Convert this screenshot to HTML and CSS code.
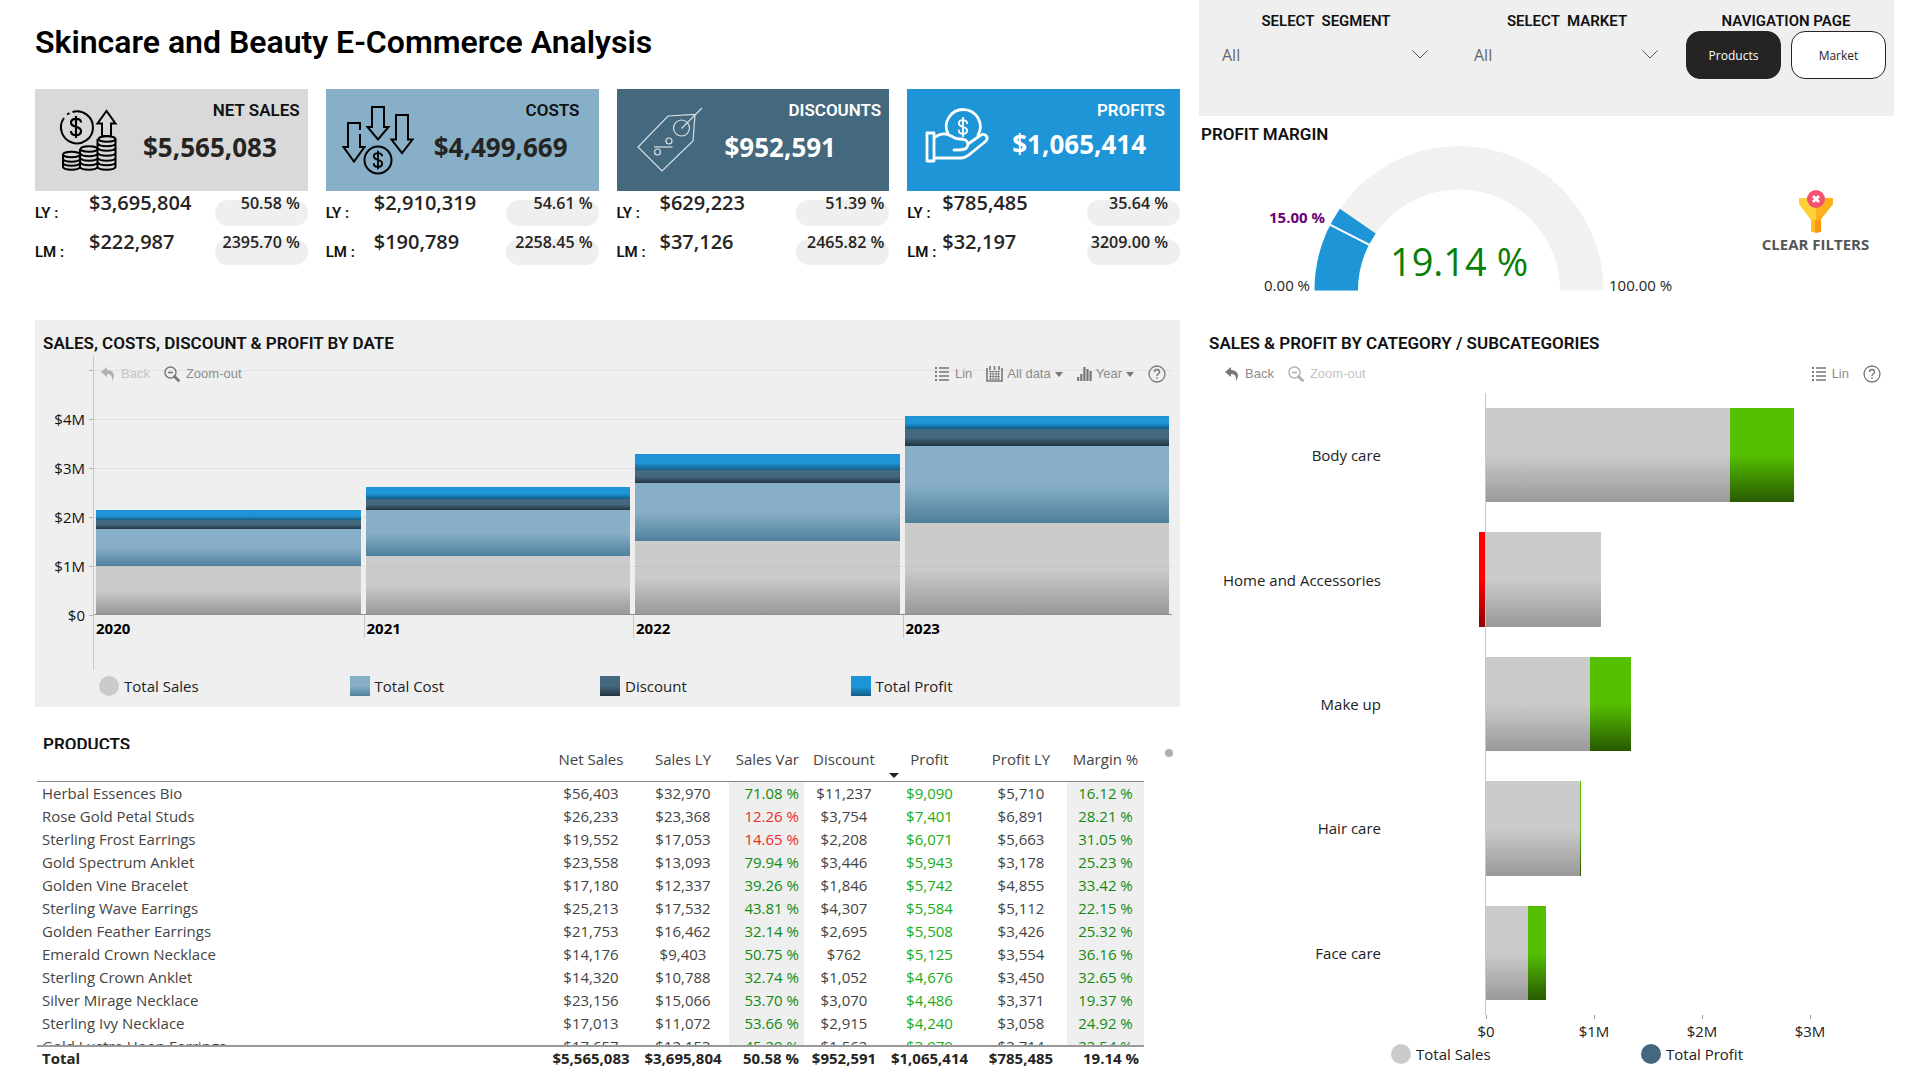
FILE: index.html
```html
<!DOCTYPE html>
<html lang="en">
<head>
<meta charset="utf-8">
<title>Skincare and Beauty E-Commerce Analysis</title>
<link rel="stylesheet" href="styles.css">
</head>
<body>
<svg class="defs" aria-hidden="true">
  <symbol id="i-back" viewBox="0 0 14 14"><path d="M6 0 0 5l6 5V7c3.500 0 5.500 1.500 5 7 3.500-5 2.500-10.500-5-11z" fill="currentColor"/></symbol>
  <symbol id="i-zoom" viewBox="0 0 16 16"><g fill="none" stroke="currentColor"><circle cx="6.500" cy="6.500" r="5.500" stroke-width="1.400"/><path d="M4 6.500h5" stroke-width="1.600"/><path d="m10.500 10.500 4 4" stroke-width="2.800" stroke-linecap="round"/></g></symbol>
  <symbol id="i-list" viewBox="0 0 14 16"><path d="M4 2h10M4 6h10M4 10h10M4 14h10" stroke="currentColor" stroke-width="1.300"/><path d="M0 2h2M0 6h2M0 10h2M0 14h2" stroke="currentColor" stroke-width="2"/></symbol>
  <symbol id="i-cal" viewBox="0 0 17 16"><path d="M1 2v13h15V2M4 0v4M8.500 0v4M13 0v4" fill="none" stroke="currentColor" stroke-width="1.600"/><path d="M3 5.500h11M3 8h11M3 10.500h11M3 13h11M4.500 5v9M7 5v9M10 5v9M12.500 5v9" stroke="currentColor" stroke-width=".8"/></symbol>
  <symbol id="i-bars" viewBox="0 0 15 16"><path d="M1.200 11v4M4.300 8v7M7.400 1v14M10.500 3v12M13.600 5v10" stroke="currentColor" stroke-width="2.200"/></symbol>
  <symbol id="i-help" viewBox="0 0 18 18"><circle cx="9" cy="9" r="8" fill="none" stroke="currentColor" stroke-width="1.300"/><path d="M6.500 7c0-3.300 5-3.300 5 0 0 1.800-2.500 1.800-2.500 4M9 12.300v1.500" fill="none" stroke="currentColor" stroke-width="1.400"/></symbol>
  <symbol id="i-caret" viewBox="0 0 8 5"><path d="M0 0h8L4 5z" fill="currentColor"/></symbol>
  <symbol id="i-chevron" viewBox="0 0 16 9"><path d="m.5.5 7.500 7.500L15.500.5" fill="none" stroke="currentColor"/></symbol>
  <symbol id="i-dollar" viewBox="0 0 12 24"><path d="M6 1v22M11 7.500C11 5 9 3.800 6 3.800S1 5.300 1 7.800C1 13 11 10.500 11 16c0 2.600-2 4.200-5 4.200S1 18.600 1 16" fill="none" stroke="currentColor" stroke-width="2.200"/></symbol>
</svg>
<main class="page">
  <div class="left">
    <h1>Skincare and Beauty E-Commerce Analysis</h1>

    <section class="kpis">
      <article class="kpi kpi-sales">
        <div class="card">
          <svg class="card-icon" viewBox="0 0 108 102" fill="none" stroke="currentColor" stroke-width="2">
            <path d="M37.500 23a16 16 0 1 1-8.500 6M32 25.500l2.500-1.400"/>
            <use href="#i-dollar" x="35" y="26" width="12" height="24"/>
            <path d="M67 47V34.500h-4.500L71.500 22l9 12.500H76V47z"/>
            <ellipse cx="36.500" cy="65.500" rx="8.500" ry="2.800"/><ellipse cx="54" cy="60" rx="8.500" ry="2.800"/><ellipse cx="72" cy="50" rx="8.500" ry="2.800"/>
            <path d="M28 65.500V78c1 3.500 16 3.500 17 0 1 3.500 16.500 3.500 17.500 0 1 3.500 17 3.500 18 0V50M45 78V60M62.500 78V50M28 70c1 3.500 16 3.500 17 0M28 74c1 3.500 16 3.500 17 0M45.500 64.500c1 3.500 16 3.500 17 0M45.500 69c1 3.500 16 3.500 17 0M45.500 73.500c1 3.500 16 3.500 17 0M63 54.500c1 3.500 16.500 3.500 17.500 0M63 59c1 3.500 16.500 3.500 17.500 0M63 64c1 3.500 16.500 3.500 17.500 0M63 69c1 3.500 16.500 3.500 17.500 0M63 73.500c1 3.500 16.500 3.500 17.500 0"/>
          </svg>
          <h2>NET SALES</h2>
          <strong>$5,565,083</strong>
        </div>
        <div class="compare"><span class="when">LY :</span><span class="amount">$3,695,804</span><span class="delta">50.58 %</span></div>
        <div class="compare"><span class="when">LM :</span><span class="amount">$222,987</span><span class="delta">2395.70 %</span></div>
      </article>
      <article class="kpi kpi-costs">
        <div class="card">
          <svg class="card-icon" viewBox="0 0 108 102" fill="none" stroke="currentColor" stroke-width="2">
            <path d="M46 18h12v20h4.500L52 50.500 41.500 38H46z"/>
            <path d="M70 26h12v24.500h4.500L76 64 65.500 50.500H70zM34 41V34H22v24h-4.500L28 72.500 38.500 58H34V45"/>
            <circle cx="52" cy="71" r="13.500"/>
            <use href="#i-dollar" x="47" y="61" width="10" height="20"/>
          </svg>
          <h2>COSTS</h2>
          <strong>$4,499,669</strong>
        </div>
        <div class="compare"><span class="when">LY :</span><span class="amount">$2,910,319</span><span class="delta">54.61 %</span></div>
        <div class="compare"><span class="when">LM :</span><span class="amount">$190,789</span><span class="delta">2258.45 %</span></div>
      </article>
      <article class="kpi kpi-discounts">
        <div class="card">
          <svg class="card-icon" viewBox="0 0 108 102" fill="none" stroke="currentColor" stroke-width="1.200">
            <path d="M51 27 78 25.500 76 52 45 82 21 58zM64.500 39.500 85 19"/>
            <circle cx="64.500" cy="39" r="8"/>
            <path d="M37 58h18.500"/><circle cx="52" cy="52" r="3"/><circle cx="40.500" cy="63" r="3"/>
          </svg>
          <h2>DISCOUNTS</h2>
          <strong>$952,591</strong>
        </div>
        <div class="compare"><span class="when">LY :</span><span class="amount">$629,223</span><span class="delta">51.39 %</span></div>
        <div class="compare"><span class="when">LM :</span><span class="amount">$37,126</span><span class="delta">2465.82 %</span></div>
      </article>
      <article class="kpi kpi-profits">
        <div class="card">
          <svg class="card-icon" viewBox="0 0 108 102" fill="none" stroke="currentColor" stroke-width="2.800" stroke-linejoin="round" stroke-linecap="round">
            <path d="M20 44h7v28h-7z"/>
            <path d="M28 48c6-4 11-4 16-1 3 2 5 3 9 3 8 0 9 5 7 8-1 3-6 3-13 3M28 69h26c4 0 6-2 9-4l16-13c3-4-1-8-5-6L61 55"/>
            <path d="M41 45a17 17 0 1 1 30 1"/>
            <use href="#i-dollar" x="50.500" y="28" width="11" height="20"/>
          </svg>
          <h2>PROFITS</h2>
          <strong>$1,065,414</strong>
        </div>
        <div class="compare"><span class="when">LY :</span><span class="amount">$785,485</span><span class="delta">35.64 %</span></div>
        <div class="compare"><span class="when">LM :</span><span class="amount">$32,197</span><span class="delta">3209.00 %</span></div>
      </article>
    </section>

    <section class="panel timeline">
      <h2>SALES, COSTS, DISCOUNT &amp; PROFIT BY DATE</h2>
      <div class="time-chart">
        <ul class="y-axis"><li></li><li>$4M</li><li>$3M</li><li>$2M</li><li>$1M</li><li>$0</li></ul>
        <div class="plot">
          <div class="columns">
            <div class="column"><i class="profit" style="height:10px"></i><i class="discount" style="height:9px"></i><i class="cost" style="height:37px"></i><i class="sales" style="height:48px"></i></div>
            <div class="column"><i class="profit" style="height:12px"></i><i class="discount" style="height:11px"></i><i class="cost" style="height:46px"></i><i class="sales" style="height:58px"></i></div>
            <div class="column"><i class="profit" style="height:16px"></i><i class="discount" style="height:13px"></i><i class="cost" style="height:58px"></i><i class="sales" style="height:73px"></i></div>
            <div class="column"><i class="profit" style="height:13px"></i><i class="discount" style="height:17px"></i><i class="cost" style="height:77px"></i><i class="sales" style="height:91px"></i></div>
          </div>
          <div class="years"><span>2020</span><span>2021</span><span>2022</span><span>2023</span></div>
        </div>
        <div class="toolbar">
          <button class="faded" disabled><svg width="14" height="14"><use href="#i-back"/></svg>Back</button>
          <button><svg width="16" height="16"><use href="#i-zoom"/></svg>Zoom-out</button>
          <span class="spacer"></span>
          <button><svg width="14" height="16"><use href="#i-list"/></svg>Lin</button>
          <button class="menu"><svg width="17" height="16"><use href="#i-cal"/></svg>All data<svg width="8" height="5"><use href="#i-caret"/></svg></button>
          <button class="menu"><svg width="15" height="16"><use href="#i-bars"/></svg>Year<svg width="8" height="5"><use href="#i-caret"/></svg></button>
          <button aria-label="Help"><svg width="18" height="18"><use href="#i-help"/></svg></button>
        </div>
      </div>
      <ul class="legend four">
        <li><i class="dot"></i>Total Sales</li><li><i class="cost"></i>Total Cost</li><li><i class="discount"></i>Discount</li><li><i class="profit"></i>Total Profit</li>
      </ul>
    </section>

    <section class="products">
      <h2>PRODUCTS</h2>
      <span class="scroll-dot"></span>
      <table>
        <thead><tr><th></th><th>Net Sales</th><th>Sales LY</th><th>Sales Var</th><th>Discount</th><th class="sorted">Profit</th><th>Profit LY</th><th>Margin %</th></tr></thead>
        <tbody>
          <tr><td>Herbal Essences Bio</td><td>$56,403</td><td>$32,970</td><td>71.08 %</td><td>$11,237</td><td>$9,090</td><td>$5,710</td><td>16.12 %</td></tr>
          <tr><td>Rose Gold Petal Studs</td><td>$26,233</td><td>$23,368</td><td class="low">12.26 %</td><td>$3,754</td><td>$7,401</td><td>$6,891</td><td>28.21 %</td></tr>
          <tr><td>Sterling Frost Earrings</td><td>$19,552</td><td>$17,053</td><td class="low">14.65 %</td><td>$2,208</td><td>$6,071</td><td>$5,663</td><td>31.05 %</td></tr>
          <tr><td>Gold Spectrum Anklet</td><td>$23,558</td><td>$13,093</td><td>79.94 %</td><td>$3,446</td><td>$5,943</td><td>$3,178</td><td>25.23 %</td></tr>
          <tr><td>Golden Vine Bracelet</td><td>$17,180</td><td>$12,337</td><td>39.26 %</td><td>$1,846</td><td>$5,742</td><td>$4,855</td><td>33.42 %</td></tr>
          <tr><td>Sterling Wave Earrings</td><td>$25,213</td><td>$17,532</td><td>43.81 %</td><td>$4,307</td><td>$5,584</td><td>$5,112</td><td>22.15 %</td></tr>
          <tr><td>Golden Feather Earrings</td><td>$21,753</td><td>$16,462</td><td>32.14 %</td><td>$2,695</td><td>$5,508</td><td>$3,426</td><td>25.32 %</td></tr>
          <tr><td>Emerald Crown Necklace</td><td>$14,176</td><td>$9,403</td><td>50.75 %</td><td>$762</td><td>$5,125</td><td>$3,554</td><td>36.16 %</td></tr>
          <tr><td>Sterling Crown Anklet</td><td>$14,320</td><td>$10,788</td><td>32.74 %</td><td>$1,052</td><td>$4,676</td><td>$3,450</td><td>32.65 %</td></tr>
          <tr><td>Silver Mirage Necklace</td><td>$23,156</td><td>$15,066</td><td>53.70 %</td><td>$3,070</td><td>$4,486</td><td>$3,371</td><td>19.37 %</td></tr>
          <tr><td>Sterling Ivy Necklace</td><td>$17,013</td><td>$11,072</td><td>53.66 %</td><td>$2,915</td><td>$4,240</td><td>$3,058</td><td>24.92 %</td></tr>
          <tr><td>Gold Lustre Hoop Earrings</td><td>$17,657</td><td>$12,153</td><td>45.29 %</td><td>$1,562</td><td>$3,979</td><td>$2,714</td><td>22.54 %</td></tr>
        </tbody>
        <tfoot><tr><td>Total</td><td>$5,565,083</td><td>$3,695,804</td><td>50.58 %</td><td>$952,591</td><td>$1,065,414</td><td>$785,485</td><td>19.14 %</td></tr></tfoot>
      </table>
    </section>
  </div>

  <div class="right">
    <section class="filters">
      <div class="filter wide">
        <label for="segment">SELECT  SEGMENT</label>
        <div class="select"><select id="segment"><option>All</option></select><svg width="16" height="9"><use href="#i-chevron"/></svg></div>
      </div>
      <div class="filter">
        <label for="market">SELECT  MARKET</label>
        <div class="select"><select id="market"><option>All</option></select><svg width="16" height="9"><use href="#i-chevron"/></svg></div>
      </div>
      <nav class="filter">
        <span class="nav-title">NAVIGATION PAGE</span>
        <div class="tabs"><button class="active">Products</button><button>Market</button></div>
      </nav>
    </section>

    <section class="margin">
      <h2>PROFIT MARGIN</h2>
      <div class="margin-body">
        <svg class="gauge" viewBox="0 0 520 160">
          <path fill="#f2f1f0" d="M115.500 146.500a144.500 144.500 0 0 1 289 0h-43.500a101 101 0 0 0-202 0z"/>
          <path fill="#1e95d6" d="M115.500 146.500A144.500 144.500 0 0 1 140.900 64.800L176.700 89.400A101 101 0 0 0 159 146.500z"/>
          <path stroke="#fff" stroke-width="2" d="M131.300 80.900 170 100.600"/>
          <text class="target" x="126" y="79" text-anchor="end">15.00 %</text>
          <text class="bound" x="111" y="147" text-anchor="end">0.00 %</text>
          <text class="bound" x="410" y="147">100.00 %</text>
          <text class="reading" x="260" y="132" text-anchor="middle">19.14 %</text>
        </svg>
        <button class="clear">
          <svg width="36" height="43" viewBox="0 0 36 43">
            <path fill="#ffd036" d="M1 8h34v6L22.500 30v12L13 42V30L1 14z"/>
            <path fill="#ffb01f" d="M18 8h17v6L23 29v13h-5z"/>
            <path fill="#ff9811" d="M13 30h10v12l-5 1-5-2z"/><path fill="#ffbe28" d="M13 30h4v12l-4-1z"/>
            <circle cx="18" cy="9" r="9" fill="#f4516c"/><path d="m15 6 6 6m0-6-6 6" stroke="#fff" stroke-width="2.800"/>
          </svg>
          CLEAR FILTERS
        </button>
      </div>
    </section>

    <section class="categories">
      <h2>SALES &amp; PROFIT BY CATEGORY / SUBCATEGORIES</h2>
      <div class="toolbar">
        <button><svg width="14" height="14"><use href="#i-back"/></svg>Back</button>
        <button class="faded" disabled><svg width="16" height="16"><use href="#i-zoom"/></svg>Zoom-out</button>
        <span class="spacer"></span>
        <button><svg width="14" height="16"><use href="#i-list"/></svg>Lin</button>
        <button aria-label="Help"><svg width="18" height="18"><use href="#i-help"/></svg></button>
      </div>
      <div class="bars">
        <div class="bar"><span>Body care</span><div class="neg"></div><div class="pos"><i class="sales" style="width:59.800%"></i><i class="gain" style="width:15.700%"></i></div></div>
        <div class="bar"><span>Home and Accessories</span><div class="neg"><i class="loss" style="width:6px"></i></div><div class="pos"><i class="sales" style="width:28.200%"></i></div></div>
        <div class="bar"><span>Make up</span><div class="neg"></div><div class="pos"><i class="sales" style="width:25.500%"></i><i class="gain" style="width:10%"></i></div></div>
        <div class="bar"><span>Hair care</span><div class="neg"></div><div class="pos"><i class="sales" style="width:23%"></i><i class="gain" style="width:.3%"></i></div></div>
        <div class="bar"><span>Face care</span><div class="neg"></div><div class="pos"><i class="sales" style="width:10.300%"></i><i class="gain" style="width:4.400%"></i></div></div>
      </div>
      <ul class="x-axis"><li>$0</li><li>$1M</li><li>$2M</li><li>$3M</li></ul>
      <ul class="legend two"><li><i class="dot"></i>Total Sales</li><li><i class="dot teal"></i>Total Profit</li></ul>
    </section>
  </div>
</main>
</body>
</html>
```
FILE: styles.css
```css
* { box-sizing: border-box; }
body { margin: 0; background: #fff; color: #111; font: 15px/20px "Open Sans", "Noto Sans", sans-serif; }
h1, h2, ul { margin: 0; padding: 0; }
ul { list-style: none; }
button, select { font: inherit; color: inherit; background: none; border: 0; padding: 0; margin: 0; }
button { cursor: pointer; }
.defs { display: none; }

.page { display: grid; grid-template-columns: 1145fr 695fr; gap: 19px; padding: 0 26px 0 35px; }
.left { padding-top: 24px; min-width: 0; }
h1 { font: 600 32px/36px Roboto, sans-serif; color: #000; margin-bottom: 29px; }
h2 { font: 600 17px/20px Roboto, sans-serif; }

/* headline figures */
.kpis { display: grid; grid-template-columns: repeat(4, 1fr); gap: 18px; }
.card { height: 102px; display: grid; grid-template-columns: 108px 1fr; grid-template-rows: 33px 1fr; }
.card-icon { grid-row: 1 / 3; width: 108px; height: 102px; color: #000; }
.card h2 { text-align: right; padding: 11px 8px 0 0; white-space: nowrap; }
.card strong { font-size: 26px; line-height: 30px; font-weight: 700; padding-top: 10px; color: #252423; }
.kpi-sales { --indent: 54px; --inset: 8px; }
.kpi-costs { --indent: 48px; --inset: 6px; }
.kpi-discounts { --indent: 43px; --inset: 5px; }
.kpi-profits { --indent: 35px; --inset: 12px; }
.kpi-sales .card { background: #d9d9d9; }
.kpi-costs .card { background: #87afc7; }
.kpi-costs h2 { padding-right: 19px; }
.kpi-discounts .card { background: #44687d; }
.kpi-profits .card { background: #1e95d6; grid-template-columns: 105px 1fr; grid-template-rows: 30px 1fr; }
.kpi-profits h2 { padding-right: 15px; }
.kpi-discounts .card *, .kpi-profits .card * { color: #fff; }
.kpi-discounts .card-icon { opacity: .8; }
.compare { display: grid; grid-template-columns: var(--indent) 1fr 93px; height: 39px; }
.when { font: 600 15px/18px Roboto, sans-serif; padding-top: 13px; white-space: nowrap; }
.amount { font-size: 20px; line-height: 24px; font-weight: 600; color: #252423; }
.delta { position: relative; z-index: 0; height: 35px; padding: 2px var(--inset) 0 0; text-align: right; font-size: 16px; font-weight: 600; white-space: nowrap; color: #252423; }
.delta::before { content: ""; position: absolute; z-index: -1; inset: 9px 0 0 0; border-radius: 13px; background: #efefef; }

/* series fills */
.sales { background: linear-gradient(#cbcbcb 50%, #999); }
.cost { background: linear-gradient(#87afc7 50%, #4f809c); }
.discount { background: linear-gradient(#44687d 50%, #22343f); }
.profit { background: linear-gradient(#1e95d6 55%, #125c85); }
.gain { background: linear-gradient(#55bf00 50%, #285a00); }
.loss { background: linear-gradient(#f00 50%, #8f0000); }

/* timeline */
.panel { background: #efefef; margin-top: 51px; padding: 13px 0 11px; }
.timeline h2 { padding-left: 8px; }
.time-chart { display: grid; grid-template-columns: 58px 1fr; padding-right: 8px; margin-top: 3px; }
.y-axis { grid-area: 1 / 1; padding-top: 4px; display: grid; gap: 29px; align-content: start; }
.y-axis li { height: 20px; display: flex; align-items: center; justify-content: flex-end; gap: 4px; }
.y-axis li::after { content: ""; width: 4px; height: 1px; background: #b5b5b5; }
.plot { grid-area: 1 / 2; height: 314px; border-left: 1px solid #c8c8c8; padding-top: 14px; }
.columns { position: relative; height: 245px; display: grid; grid-template-columns: repeat(4, 1fr); align-items: end; border-bottom: 1px solid #8c8c8c; }
.columns::after { content: ""; position: absolute; inset: 0; background: repeating-linear-gradient(rgba(150, 150, 150, .15) 0 1px, transparent 1px 49px); }
.column { padding: 0 3px 0 2px; }
.column i { display: block; }
.years { display: grid; grid-template-columns: repeat(4, 1fr); font-weight: 700; color: #000; }
.years span { height: 23px; padding: 3px 0 0 2px; }
.years span + span { border-left: 1px solid #c8c8c8; }

.toolbar { display: flex; align-items: center; gap: 14px; height: 18px; font: 13px/18px "Liberation Sans", Arial, sans-serif; color: #8c8c8c; }
.toolbar button { display: flex; align-items: center; gap: 6px; white-space: nowrap; }
.toolbar .menu { gap: 4px; }
.toolbar svg { color: #777; }
.toolbar .faded { color: #c4c4c4; }
.toolbar .faded svg { color: #b0b0b0; }
.spacer { flex: 1; }
.time-chart .toolbar { grid-area: 1 / 2; z-index: 1; margin-top: 9px; padding: 0 6px 0 8px; }

.legend { display: grid; color: #222; }
.legend li { display: flex; align-items: center; gap: 5px; }
.legend i { width: 20px; height: 20px; }
.legend .dot { border-radius: 50%; background: #cbcbcb; }
.legend .teal { background: #44687d; }
.four { grid-template-columns: repeat(4, 1fr); padding: 0 79px 0 64px; margin-top: 6px; }
.two { grid-template-columns: 250px 1fr; padding-left: 192px; margin-top: 3px; }

/* products table */
.products { position: relative; margin-top: 27px; }
.products h2 { height: 15px; overflow: hidden; padding-left: 8px; }
.scroll-dot { position: absolute; right: 7px; top: 15px; width: 8px; height: 8px; border-radius: 50%; background: #b0b0b0; }
table, thead, tbody, tfoot { display: block; }
table { margin: 0 36px 0 2px; color: #444; line-height: 23px; }
tr { display: grid; grid-template-columns: 1fr 92px 92px 75px 80px 91px 92px 77px; }
th, td { padding: 0; text-align: center; white-space: nowrap; }
th { font-weight: 400; height: 32px; line-height: 21px; }
td:first-child { text-align: left; padding-left: 5px; }
th:nth-child(4), td:nth-child(4) { text-align: right; padding-right: 5px; }
thead { border-bottom: 1px solid #888; }
.sorted { position: relative; }
.sorted::before { content: ""; position: absolute; left: 5px; bottom: 3px; border: 5px solid transparent; border-top-color: #222; border-bottom: 0; }
tbody { height: 263px; overflow-y: auto; scrollbar-width: none; }
tbody td:nth-child(4), tbody td:nth-child(8) { background: #efefef; color: #128a12; }
tbody td:nth-child(6) { color: #17ad17; }
tbody td.low { color: #f02a2a; }
tfoot { border-top: 2px solid #999; font-weight: 700; color: #252423; }
tfoot td:nth-child(8) { text-align: right; padding-right: 5px; }

/* filters */
.filters { display: grid; grid-template-columns: 228fr 190fr 200fr; gap: 24px; height: 116px; padding: 12px 8px 0 21px; background: #efefef; }
.wide { padding-right: 16px; }
.filter label, .nav-title { display: block; text-align: center; white-space: pre; font: 600 15px/18px Roboto, sans-serif; }
.select { position: relative; margin-top: 1px; }
.select select { appearance: none; width: 100%; height: 38px; padding: 10px 2px 0; font-size: 16px; color: #666; border-bottom: 1px solid #eaeaea; }
.select svg { position: absolute; right: 4px; top: 19px; color: #555; pointer-events: none; }
.tabs { display: grid; grid-template-columns: 1fr 1fr; gap: 10px; margin-top: 1px; }
.tabs button { height: 48px; border: 1px solid #252423; border-radius: 14px; background: #fff; color: #252423; font-size: 12px; padding-top: 2px; }
.tabs .active { background: #252423; color: #fff; }

/* profit margin */
.margin h2 { padding: 8px 0 0 2px; }
.margin-body { display: flex; align-items: flex-start; }
.gauge { width: 520px; height: 160px; }
.gauge text { font-size: 15px; fill: #252423; }
.gauge .target { fill: #6b007b; font-weight: 700; }
.gauge .reading { font-size: 38px; fill: #078007; }
.clear { flex: 1; display: flex; flex-direction: column; align-items: center; margin: 46px 0 0 18px; font-weight: 700; line-height: 22px; color: #555; }

/* categories */
.categories { margin-top: 29px; }
.categories h2 { padding-left: 10px; }
.categories .toolbar { margin: 12px 0 10px; padding: 0 13px 0 26px; }
.bars { height: 622px; display: grid; grid-template-rows: repeat(5, 1fr); }
.bar { display: grid; grid-template-columns: 182px 104px 1fr; }
.bar span { align-self: center; text-align: right; color: #222; }
.neg, .pos { display: flex; padding: 15px 0; }
.neg { justify-content: flex-end; }
.pos { border-left: 1px solid #c8c8c8; }
.x-axis { display: grid; grid-template-columns: repeat(4, 1fr); padding: 0 30px 0 233px; text-align: center; color: #222; }
.x-axis li::before { content: ""; display: block; width: 1px; height: 4px; margin: 0 auto 2px; background: #999; }
```
